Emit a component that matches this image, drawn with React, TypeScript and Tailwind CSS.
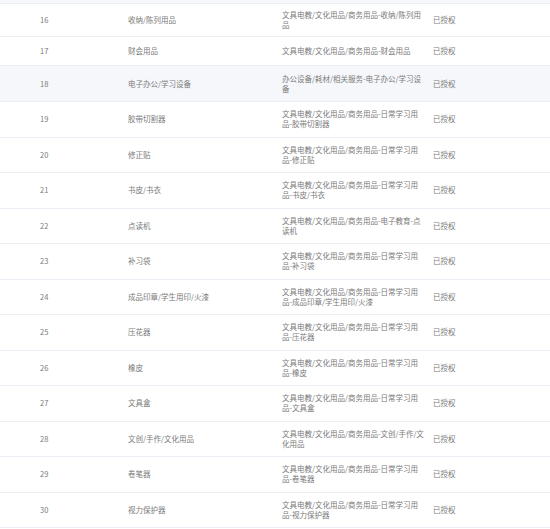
import React from 'react';

type Row = { id: number; name: string; path: string[]; h: string };

const rows: Row[] = [
  { id: 16, name: '收纳/陈列用品', path: ['文具电教/文化用品/商务用品-收纳/陈列用', '品'], h: 'h-[33px]' },
  { id: 17, name: '财会用品', path: ['文具电教/文化用品/商务用品-财会用品'], h: 'h-[29px]' },
  { id: 18, name: '电子办公/学习设备', path: ['办公设备/耗材/相关服务-电子办公/学习设', '备'], h: 'h-[36px]' },
  { id: 19, name: '胶带切割器', path: ['文具电教/文化用品/商务用品-日常学习用', '品-胶带切割器'], h: 'h-[35.5px]' },
  { id: 20, name: '修正贴', path: ['文具电教/文化用品/商务用品-日常学习用', '品-修正贴'], h: 'h-[35.5px]' },
  { id: 21, name: '书皮/书衣', path: ['文具电教/文化用品/商务用品-日常学习用', '品-书皮/书衣'], h: 'h-[35.5px]' },
  { id: 22, name: '点读机', path: ['文具电教/文化用品/商务用品-电子教育-点', '读机'], h: 'h-[35.5px]' },
  { id: 23, name: '补习袋', path: ['文具电教/文化用品/商务用品-日常学习用', '品-补习袋'], h: 'h-[35.5px]' },
  { id: 24, name: '成品印章/学生用印/火漆', path: ['文具电教/文化用品/商务用品-日常学习用', '品-成品印章/学生用印/火漆'], h: 'h-[35.5px]' },
  { id: 25, name: '压花器', path: ['文具电教/文化用品/商务用品-日常学习用', '品-压花器'], h: 'h-[35.5px]' },
  { id: 26, name: '橡皮', path: ['文具电教/文化用品/商务用品-日常学习用', '品-橡皮'], h: 'h-[35.5px]' },
  { id: 27, name: '文具盒', path: ['文具电教/文化用品/商务用品-日常学习用', '品-文具盒'], h: 'h-[35.5px]' },
  { id: 28, name: '文创/手作/文化用品', path: ['文具电教/文化用品/商务用品-文创/手作/文', '化用品'], h: 'h-[35.5px]' },
  { id: 29, name: '卷笔器', path: ['文具电教/文化用品/商务用品-日常学习用', '品-卷笔器'], h: 'h-[35.5px]' },
  { id: 30, name: '视力保护器', path: ['文具电教/文化用品/商务用品-日常学习用', '品-视力保护器'], h: 'h-[35.5px]' },
];

const App: React.FC = () => {
  return (
    <div
      className="w-[550px] h-[529px] overflow-hidden bg-white text-[7.5px] leading-[10px] text-[#7a7a7a]"
      style={{ fontFamily: '"Noto Sans CJK SC", "Noto Sans", sans-serif' }}
    >
      <div className="h-[4px] bg-[#f7f8fb] border-b border-[#ebeef5]" />
      {rows.map((r) => (
        <div
          key={r.id}
          className={`flex items-center border-b border-[#ebeef5] ${r.h} ${r.id === 18 ? 'bg-[#f5f7fa]' : ''}`}
        >
          <div className="w-[128px] pl-[40px] shrink-0">{r.id}</div>
          <div className="w-[154px] shrink-0">{r.name}</div>
          <div className="w-[151px] shrink-0">
            {r.path.map((l, i) => (
              <div key={i}>{l}</div>
            ))}
          </div>
          <div className="flex-1">已授权</div>
        </div>
      ))}
    </div>
  );
};

export default App;
